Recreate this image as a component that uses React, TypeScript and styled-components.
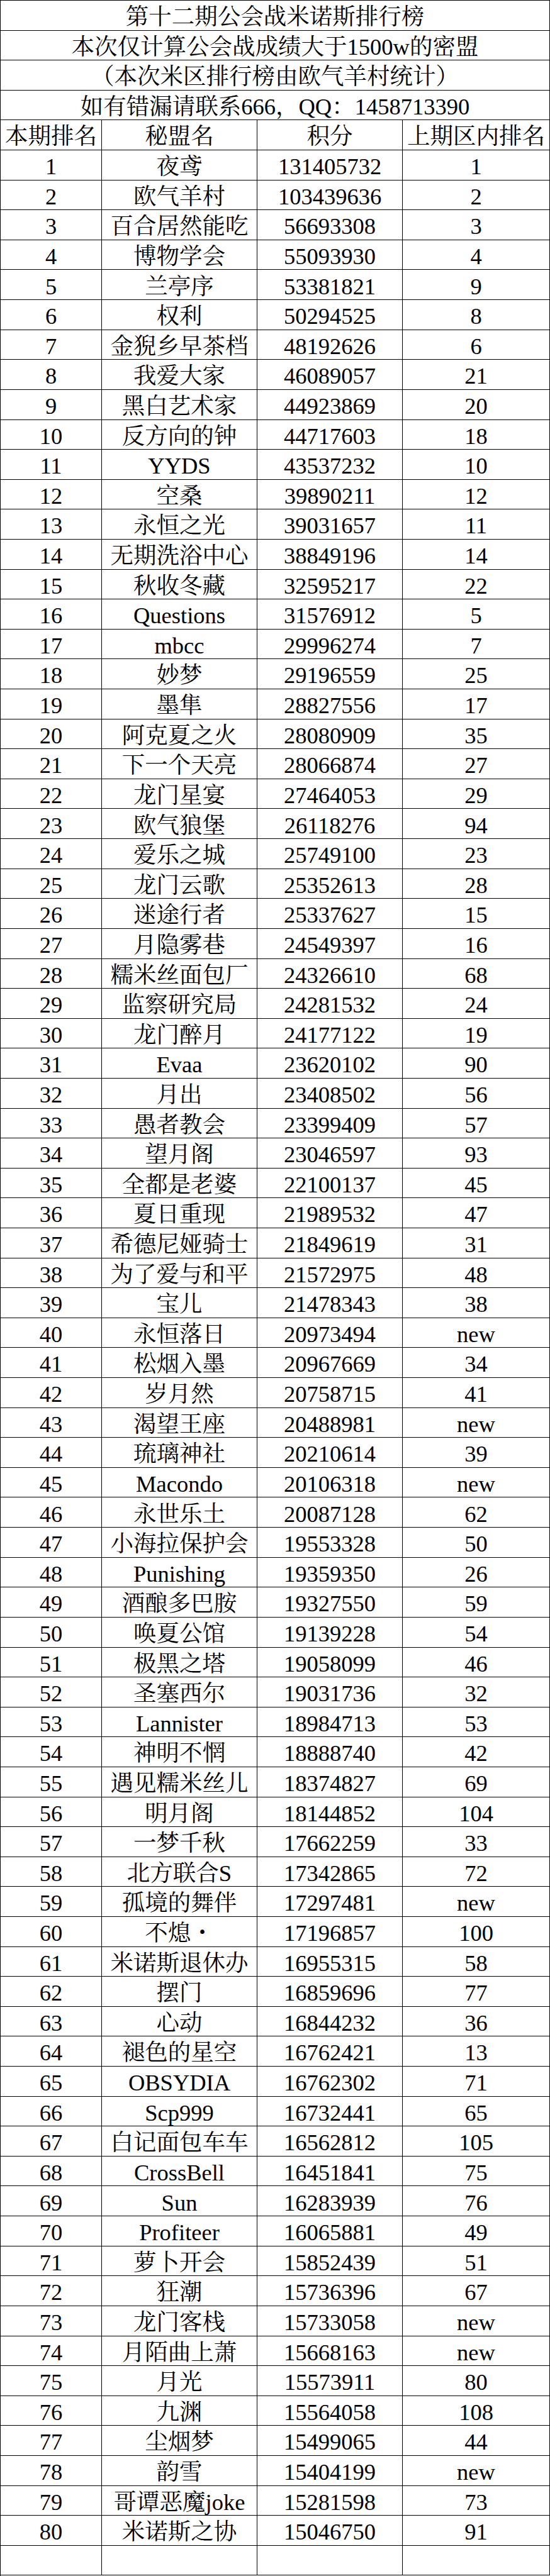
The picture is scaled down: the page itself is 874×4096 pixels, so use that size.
import styled, { createGlobalStyle } from 'styled-components';

const GlobalStyle = createGlobalStyle`
  html, body {
    margin: 0;
    padding: 0;
    background: #fff;
  }
  body {
    font-family: 'Liberation Serif', 'Noto Serif CJK SC', 'Noto Sans CJK SC', serif;
    color: #000;
  }
`;

const titleLines = [
  '第十二期公会战米诺斯排行榜',
  '本次仅计算公会战成绩大于1500w的密盟',
  '（本次米区排行榜由欧气羊村统计）',
  '如有错漏请联系666，QQ：1458713390',
];

const headers = ['本期排名', '秘盟名', '积分', '上期区内排名'];

// name, score, last period rank
const guilds: [string, string, string][] = [
  ['夜鸢', '131405732', '1'],
  ['欧气羊村', '103439636', '2'],
  ['百合居然能吃', '56693308', '3'],
  ['博物学会', '55093930', '4'],
  ['兰亭序', '53381821', '9'],
  ['权利', '50294525', '8'],
  ['金猊乡早茶档', '48192626', '6'],
  ['我爱大家', '46089057', '21'],
  ['黑白艺术家', '44923869', '20'],
  ['反方向的钟', '44717603', '18'],
  ['YYDS', '43537232', '10'],
  ['空桑', '39890211', '12'],
  ['永恒之光', '39031657', '11'],
  ['无期洗浴中心', '38849196', '14'],
  ['秋收冬藏', '32595217', '22'],
  ['Questions', '31576912', '5'],
  ['mbcc', '29996274', '7'],
  ['妙梦', '29196559', '25'],
  ['墨隼', '28827556', '17'],
  ['阿克夏之火', '28080909', '35'],
  ['下一个天亮', '28066874', '27'],
  ['龙门星宴', '27464053', '29'],
  ['欧气狼堡', '26118276', '94'],
  ['爱乐之城', '25749100', '23'],
  ['龙门云歌', '25352613', '28'],
  ['迷途行者', '25337627', '15'],
  ['月隐雾巷', '24549397', '16'],
  ['糯米丝面包厂', '24326610', '68'],
  ['监察研究局', '24281532', '24'],
  ['龙门醉月', '24177122', '19'],
  ['Evaa', '23620102', '90'],
  ['月出', '23408502', '56'],
  ['愚者教会', '23399409', '57'],
  ['望月阁', '23046597', '93'],
  ['全都是老婆', '22100137', '45'],
  ['夏日重现', '21989532', '47'],
  ['希德尼娅骑士', '21849619', '31'],
  ['为了爱与和平', '21572975', '48'],
  ['宝儿', '21478343', '38'],
  ['永恒落日', '20973494', 'new'],
  ['松烟入墨', '20967669', '34'],
  ['岁月然', '20758715', '41'],
  ['渴望王座', '20488981', 'new'],
  ['琉璃神社', '20210614', '39'],
  ['Macondo', '20106318', 'new'],
  ['永世乐土', '20087128', '62'],
  ['小海拉保护会', '19553328', '50'],
  ['Punishing', '19359350', '26'],
  ['酒酿多巴胺', '19327550', '59'],
  ['唤夏公馆', '19139228', '54'],
  ['极黑之塔', '19058099', '46'],
  ['圣塞西尔', '19031736', '32'],
  ['Lannister', '18984713', '53'],
  ['神明不惘', '18888740', '42'],
  ['遇见糯米丝儿', '18374827', '69'],
  ['明月阁', '18144852', '104'],
  ['一梦千秋', '17662259', '33'],
  ['北方联合S', '17342865', '72'],
  ['孤境的舞伴', '17297481', 'new'],
  ['不熄・', '17196857', '100'],
  ['米诺斯退休办', '16955315', '58'],
  ['摆门', '16859696', '77'],
  ['心动', '16844232', '36'],
  ['褪色的星空', '16762421', '13'],
  ['OBSYDIA', '16762302', '71'],
  ['Scp999', '16732441', '65'],
  ['白记面包车车', '16562812', '105'],
  ['CrossBell', '16451841', '75'],
  ['Sun', '16283939', '76'],
  ['Profiteer', '16065881', '49'],
  ['萝卜开会', '15852439', '51'],
  ['狂潮', '15736396', '67'],
  ['龙门客栈', '15733058', 'new'],
  ['月陌曲上萧', '15668163', 'new'],
  ['月光', '15573911', '80'],
  ['九渊', '15564058', '108'],
  ['尘烟梦', '15499065', '44'],
  ['韵雪', '15404199', 'new'],
  ['哥谭恶魔joke', '15281598', '73'],
  ['米诺斯之协', '15046750', '91'],
];

const App = () => {
  return (
    <>
      <GlobalStyle />
      <Sheet>
        {titleLines.map((line) => (
          <Cell key={line} $wide>
            {line}
          </Cell>
        ))}
        {headers.map((h) => (
          <Cell key={h}>{h}</Cell>
        ))}
        {guilds.map(([name, score, last], i) => (
          <Row key={name}>
            <Cell>{i + 1}</Cell>
            <Cell>{name}</Cell>
            <Cell>{score}</Cell>
            <Cell>{last}</Cell>
          </Row>
        ))}
        <Row>
          <Cell />
          <Cell />
          <Cell />
          <Cell />
        </Row>
      </Sheet>
    </>
  );
};

export default App;

const Sheet = styled.div`
  width: 874px;
  height: 4096px;
  box-sizing: border-box;
  border-top: 1px solid #000;
  border-left: 1px solid #000;
  display: grid;
  grid-template-columns: 161px 247px 231px 1fr;
  grid-auto-rows: calc(4095px / 86);
`;

const Row = styled.div`
  display: contents;
`;

const Cell = styled.div<{ $wide?: boolean }>`
  grid-column: ${(p) => (p.$wide ? '1 / -1' : 'auto')};
  border-right: 1px solid #000;
  border-bottom: 1px solid #000;
  display: flex;
  align-items: center;
  justify-content: center;
  padding-top: 6px;
  font-size: 36.5px;
  line-height: 1;
  white-space: nowrap;
  overflow: hidden;
`;
